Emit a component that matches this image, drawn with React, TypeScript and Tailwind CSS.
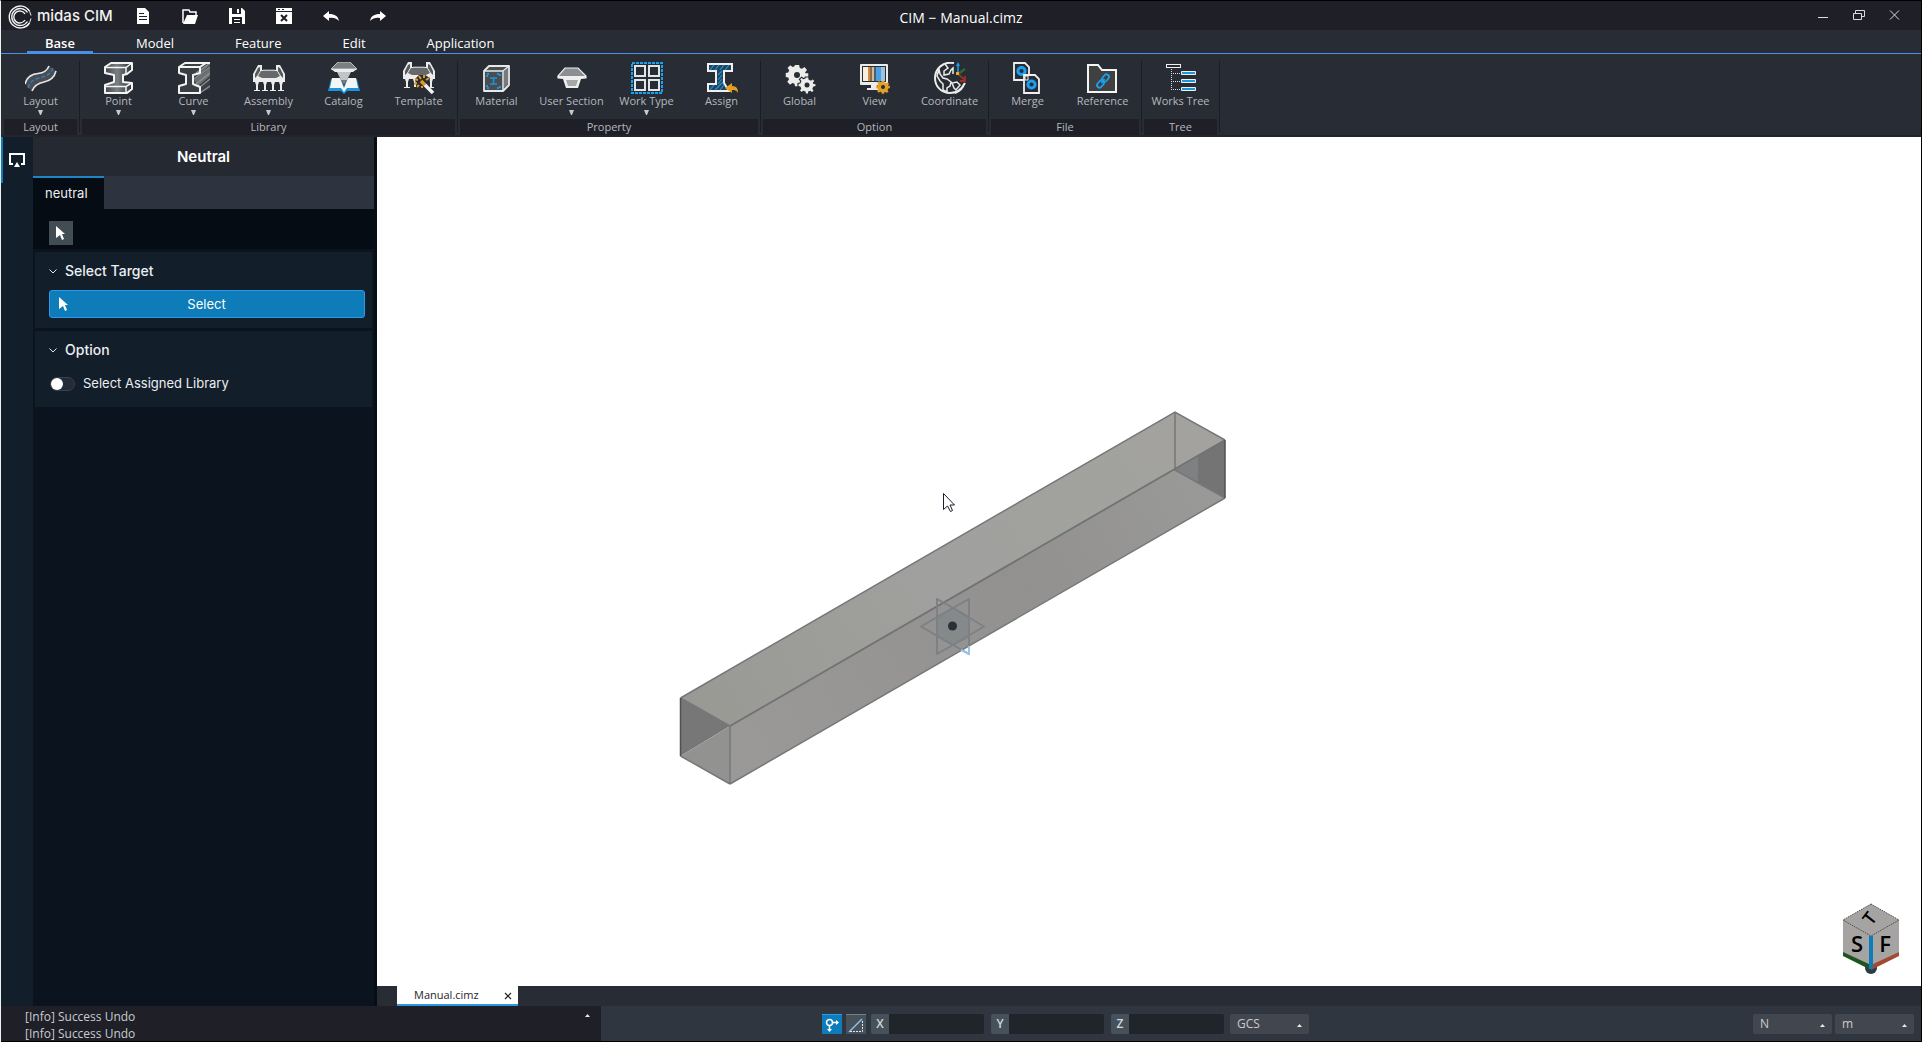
import { useState } from "react";
import type { ReactNode } from "react";

type Tool = { name: string; icon: ReactNode; menu?: boolean };
type Group = { name: string; tools: Tool[] };

/* Ribbon icons, all on a 32px grid */

const LayoutIcon = () => (
  <svg viewBox="0 0 32 32" className="size-8" fill="none">
    <path d="M0 22C2 14 7 12 13 11.500S22 9 24 4L31 9C29 17 24 19 19 20S9 24 7 29Z" fill="#4a4d51" />
    <path d="M0 22C2 14 7 12 13 11.500S22 9 24 4M31 9C29 17 24 19 19 20S9 24 7 29" stroke="#e6e6e6" strokeWidth="1.600" />
    <path d="M3 26C6 17 11 17 16 15.500S25 13 28 6" stroke="#2b83c6" strokeWidth="1.300" strokeDasharray="4 2" />
  </svg>
);

const PointIcon = () => (
  <svg viewBox="0 0 32 32" className="size-8">
    <defs>
      <linearGradient id="web" x1="0" x2="1">
        <stop offset="0" stopColor="#45484b" />
        <stop offset=".45" stopColor="#7c7f81" />
        <stop offset="1" stopColor="#2f3236" />
      </linearGradient>
    </defs>
    <path d="M2 5L8 1H29V8L24 12L20 13V20L29 21V27L24 31H2V23L11 20V13L2 11Z" fill="url(#web)" stroke="#f4f4f4" strokeWidth="2" strokeLinejoin="round" />
    <path d="M2 5.500H23L29 1M23 5.500V12M2 24.500H23L29 21M23 24.500V31" fill="none" stroke="#f4f4f4" strokeWidth="1.500" />
  </svg>
);

const CurveIcon = () => (
  <svg viewBox="0 0 32 32" className="size-8" fill="none">
    <path d="M1 5L7 1H32V27L21 31H1V24L8 22V13L1 11Z" fill="#3b3f43" />
    <path d="M16 18L32 6V14L20 24ZM20 10L30 2H32V3L22 12Z" fill="#6c7073" />
    <path d="M18 11L32 1M16 17L32 5M18 22L32 11M22 25L32 17M22 31L32 24" stroke="#8e9194" strokeWidth="1.200" />
    <path d="M32 1H7L1 5V11L8 13V22L1 24V31H22V25L15 22V13L22 11V5H1M22 5L28 1" stroke="#f4f4f4" strokeWidth="2" strokeLinejoin="round" />
  </svg>
);

const Bridge = () => (
  <>
    <path d="M5 3H9V8H23V3H27L32 12V20H0V12Z" fill="#ececec" />
    <path d="M8 9H24L27 14L23 16H9L5 14Z" fill="#66696c" />
    <path d="M5 6L7 5V9L4 14L2 16V12ZM27 6L25 5V9L28 14L30 16V12Z" fill="#55585b" />
    <path d="M10 8H22" stroke="#9a9c9e" />
  </>
);

const AssemblyIcon = () => (
  <svg viewBox="0 0 32 32" className="size-8" fill="none">
    <Bridge />
    <path d="M2 20H6L5 23V28H7V29H1V28H3V23ZM10 20H14L13 23V28H15V29H9V28H11V23ZM18 20H22L21 23V28H23V29H17V28H19V23ZM26 20H30L29 23V28H31V29H25V28H27V23Z" fill="#ececec" />
  </svg>
);

const CatalogIcon = () => (
  <svg viewBox="0 0 32 32" className="size-8">
    <path d="M3 17L13 17L16 25L19 17H29L32 29H19L16 32L13 29H0Z" fill="#1b95dc" />
    <path d="M4 16H12L16 26L20 16H28L30 26H19L16 30L13 26H2Z" fill="#f4f4f4" />
    <path d="M10 0H22L29 7H3Z" fill="#7c7f81" stroke="#d8d8d8" strokeWidth=".800" />
    <path d="M3 7H29L25 10H7Z" fill="#ececec" />
    <path d="M9 10H23L19 18H13Z" fill="#c2c4c5" />
    <path d="M13 18H19L16 23Z" fill="#77797b" />
  </svg>
);

const TemplateIcon = () => (
  <svg viewBox="0 0 32 32" className="size-8" fill="none">
    <g transform="translate(0 -3)">
      <Bridge />
      <path d="M2 20H6L5 23V28H7V29H1V28H3V23ZM10 20H14L13 23V28H11V23ZM26 20H30L29 23V28H31V29H27V23Z" fill="#ececec" />
    </g>
    <path d="M12 17L16 13H22L27 16L26 22L20 27H14Z" fill="#282c34" />
    <path d="M12 17L15 18M16 14L18 17M21 13V16M14 25L16 23M26 16L23 18M11 22L14 21M19 24V26" stroke="#e39a24" strokeWidth="2" />
    <path d="M18 19L23 24" stroke="#e39a24" strokeWidth="3.500" />
    <path d="M22 23L30 31" stroke="#f4f4f4" strokeWidth="3.500" />
  </svg>
);

const MaterialIcon = () => (
  <svg viewBox="0 0 32 32" className="size-8" fill="none">
    <path d="M3 9L8 4H28V23L22 29H3Z" fill="#4a4d50" stroke="#e8e8e8" strokeWidth="1.800" strokeLinejoin="round" />
    <path d="M3 9H22V29M22 9L28 4" stroke="#e8e8e8" strokeWidth="1.500" />
    <path d="M23 9L27 6V22L23 26Z" fill="#777a7c" />
    <path d="M6 15V12H9M16 12H19V15M6 23V26H9M16 26H19V23" stroke="#1b95dc" strokeWidth="2" strokeDasharray="2 1" />
    <path d="M9 16H16M9 22H16M12.500 16V22" stroke="#1b95dc" strokeWidth="1.500" />
  </svg>
);

const UserSectionIcon = () => (
  <svg viewBox="0 0 32 32" className="size-8">
    <path d="M9 6H22L30 14V16H2V14Z" fill="#8c8f91" stroke="#eee" strokeWidth="1.200" />
    <path d="M2 14H30V16L25 17L22 26H10L7 17L2 16Z" fill="#efefef" />
    <path d="M10 18H22L20 24H12Z" fill="#a5a7a8" />
  </svg>
);

const WorkTypeIcon = () => (
  <svg viewBox="0 0 32 32" className="size-8" fill="none">
    <rect x="1" y="1" width="30" height="30" stroke="#1ba0f0" strokeWidth="2" strokeDasharray="3 1" />
    <path d="M4 4H14V14H4ZM18 4H28V14H18ZM4 18H14V28H4ZM18 18H28V28H18Z" stroke="#dfe6ea" strokeWidth="2" />
  </svg>
);

const AssignIcon = () => (
  <svg viewBox="0 0 32 32" className="size-8" fill="none">
    <path d="M2 2H26V9H18V21L23 29H2V22H10V9H2Z" fill="#24435a" stroke="#f0f0f0" strokeWidth="2" />
    <path d="M4 8L8 3M9 8L13 3M14 8L18 3M19 8L23 3M12 13L16 9M12 18L16 13M12 22L16 17M4 28L8 23M9 28L17 20M14 28L18 23" stroke="#1b95dc" strokeWidth="1.200" />
    <path d="M19 26L26 21V24C31 24 32 27 32 31C30 28 29 28 26 28V31Z" fill="#e3a024" />
  </svg>
);

const gearPath =
  "M-1.700 -8H1.700L2.200 -5.700L4 -5L6 -6.400L8 -4L6.500 -2.200L6.800 -1.500H9V1.700L6.800 2L6 3.800L7.300 5.800L5 8L3.300 6.500L1.700 7L1.500 9H-1.600L-2 7L-3.700 6.400L-5.600 7.700L-7.800 5.300L-6.400 3.600L-7 2L-9 1.600V-1.600L-7 -2L-6.200 -3.800L-7.600 -5.600L-5.400 -7.800L-3.600 -6.500L-2 -7Z";

const GlobalIcon = () => (
  <svg viewBox="0 0 32 32" className="size-8">
    <path d={gearPath} transform="translate(13 13) scale(1.250)" fill="#ececea" />
    <circle cx="13" cy="13" r="3" fill="#282c34" />
    <path d={gearPath} transform="translate(23 23) scale(1)" fill="#ececea" stroke="#282c34" strokeWidth="1.200" />
    <circle cx="23" cy="23" r="2.500" fill="#282c34" />
  </svg>
);

const ViewIcon = () => (
  <svg viewBox="0 0 32 32" className="size-8">
    <rect x="1" y="2" width="28" height="21" rx="1" fill="#ececea" />
    <path d="M12 23H18V26H22V28H8V26H12Z" fill="#ececea" />
    <path d="M3 4H27V20H3Z" fill="#282c34" />
    <path d="M4 5H9V19H4Z" fill="#fbeedb" />
    <path d="M9 5H11V19H9Z" fill="#c98e4c" />
    <path d="M11 5H13V19H11Z" fill="#8b6a48" />
    <path d="M13 5H15V19H13Z" fill="#d8b98d" />
    <path d="M15 5H17V19H15Z" fill="#45617c" />
    <path d="M17 5H22V19H17Z" fill="#4aa0e0" />
    <path d="M22 5H26V19H22Z" fill="#9fc2dd" />
    <path d={gearPath} transform="translate(24 25) scale(.760)" fill="#e3a024" />
    <circle cx="24" cy="25" r="2" fill="#282c34" />
  </svg>
);

const CoordinateIcon = () => (
  <svg viewBox="0 0 32 32" className="size-8" fill="none">
    <path d="M20 1C9 -1 1 7 1 16S8 31 16 31S28 27 31 21M21 31C26 29 29 26 30 22" stroke="#ececea" strokeWidth="2" />
    <path d="M5 7L6 12L9 16L13 17L17 20L16 24L13 26V30L9 28V22L6 19L3 14ZM11 2L14 6L10 9V13L15 12L17 8L19 6V12M20 26L18 21L23 20L26 23L22 28Z" stroke="#ececea" strokeWidth="1.500" />
    <path d="M24 12V3" stroke="#1ba0f0" strokeWidth="1.500" />
    <path d="M22 4L24 0L26 4Z" fill="#1ba0f0" />
    <path d="M24 12L31 7" stroke="#2b6a2d" strokeWidth="2.500" />
    <path d="M24 12L31 18M31 14V19H26" stroke="#9d2f2b" strokeWidth="1.800" />
    <rect x="22" y="10" width="3" height="3" fill="#f0a91c" />
  </svg>
);

const MergeIcon = () => (
  <svg viewBox="0 0 32 32" className="size-8" fill="none">
    <path d="M2 1H13L17 5V18H2Z" stroke="#f0f0f0" strokeWidth="1.800" />
    <circle cx="9.500" cy="9" r="3.600" stroke="#1ba0f0" strokeWidth="3" />
    <path d="M12 13H23L27 17V31H12Z" fill="#282c34" stroke="#f0f0f0" strokeWidth="1.800" />
    <circle cx="19.500" cy="22.500" r="3.600" stroke="#1ba0f0" strokeWidth="3" />
    <path d="M13 14H16V18H13Z" stroke="#f0f0f0" />
  </svg>
);

const ReferenceIcon = () => (
  <svg viewBox="0 0 32 32" className="size-8" fill="none">
    <path d="M1 3H11L15 8H29V30H1Z" fill="#3f403f" stroke="#f4f4f4" strokeWidth="2" />
    <g stroke="#1ba0f0" strokeWidth="1.800">
      <rect x="-4" y="-2.500" width="8" height="5" rx="2.500" transform="translate(18.500 16) rotate(-50)" />
      <rect x="-4" y="-2.500" width="8" height="5" rx="2.500" transform="translate(13.500 22) rotate(-50)" />
      <path d="M14.500 21L17.500 17" />
    </g>
  </svg>
);

const WorksTreeIcon = () => (
  <svg viewBox="0 0 32 32" className="size-8" fill="none">
    <path d="M6.500 7V27M6 11.500H16M6 19.500H16M6 27.500H16" stroke="#dcdcdc" strokeDasharray="1 1" />
    <rect x="1.500" y="2.500" width="14" height="3" stroke="#f0f0f0" />
    <path d="M16.500 9.500H30.500V12.500H16.500ZM16.500 17.500H30.500V20.500H16.500ZM16.500 25.500H30.500V28.500H16.500Z" fill="#1b95dc" stroke="#f0f0f0" />
  </svg>
);

const groups: Group[] = [
  { name: "Layout", tools: [{ name: "Layout", icon: <LayoutIcon />, menu: true }] },
  {
    name: "Library",
    tools: [
      { name: "Point", icon: <PointIcon />, menu: true },
      { name: "Curve", icon: <CurveIcon />, menu: true },
      { name: "Assembly", icon: <AssemblyIcon />, menu: true },
      { name: "Catalog", icon: <CatalogIcon /> },
      { name: "Template", icon: <TemplateIcon /> },
    ],
  },
  {
    name: "Property",
    tools: [
      { name: "Material", icon: <MaterialIcon /> },
      { name: "User Section", icon: <UserSectionIcon />, menu: true },
      { name: "Work Type", icon: <WorkTypeIcon />, menu: true },
      { name: "Assign", icon: <AssignIcon /> },
    ],
  },
  {
    name: "Option",
    tools: [
      { name: "Global", icon: <GlobalIcon /> },
      { name: "View", icon: <ViewIcon /> },
      { name: "Coordinate", icon: <CoordinateIcon /> },
    ],
  },
  {
    name: "File",
    tools: [
      { name: "Merge", icon: <MergeIcon /> },
      { name: "Reference", icon: <ReferenceIcon /> },
    ],
  },
  { name: "Tree", tools: [{ name: "Works Tree", icon: <WorksTreeIcon /> }] },
];

const quickActions = [
  {
    name: "New",
    icon: (
      <>
        <path d="M2 0H10L14 4V16H2Z" fill="#fff" />
        <path d="M4 5.500H9M4 8.500H12M4 11.500H12" stroke="#1e1f27" />
      </>
    ),
  },
  {
    name: "Open",
    icon: (
      <>
        <path d="M1 15V2H7L8 4H14V7" fill="none" stroke="#fff" strokeWidth="1.500" />
        <path d="M5 7H16L13 16H1Z" fill="#fff" />
      </>
    ),
  },
  {
    name: "Save",
    icon: (
      <>
        <path d="M0 0H13L16 3V16H0Z" fill="#fff" />
        <path d="M3 0H12V6H3ZM3 9H13V16H3Z" fill="#1e1f27" />
        <path d="M8 1H10V5H8ZM5 11H11V12H5ZM5 14H11V15H5Z" fill="#fff" />
      </>
    ),
  },
  {
    name: "Close",
    icon: (
      <>
        <path d="M0 0H16V3H0ZM0 4H16V16H0Z" fill="#fff" />
        <path d="M2 1H4V2H2ZM6 1H8V2H6Z" fill="#1e1f27" />
        <path d="M5 7L11 13M11 7L5 13" stroke="#1e1f27" strokeWidth="2" />
      </>
    ),
  },
  {
    name: "Undo",
    icon: <path d="M0 8L6 3V6C12 6 15 8 16 13C13 10 10 9.500 6 10V13Z" fill="#fff" />,
  },
  {
    name: "Redo",
    icon: <path d="M16 8L10 3V6C4 6 1 8 0 13C3 10 6 9.500 10 10V13Z" fill="#fff" />,
  },
];

const Pointer = ({ className }: { className: string }) => (
  <svg viewBox="0 0 10 15" className={className}>
    <path d="M0 0L9 8H6L8 13L6 14L4 9L0 12Z" fill="#fff" />
  </svg>
);

const TitleBar = () => (
  <header className="grid h-[29px] grid-cols-[1fr_auto_1fr] bg-[#1e1f27]">
    <div className="flex items-center pl-[7px]">
      <svg viewBox="0 0 24 24" className="mt-[2px] size-6" fill="none" stroke="#f2f2f2">
        <path d="M21.500 6A11 11 0 1 0 21.500 18" strokeWidth="1.400" />
        <path d="M23 10.500A11 11 0 0 0 19 3.500M23 13.500A11 11 0 0 1 19 20.500" strokeWidth="1" />
        <path d="M19.500 7.500A8.500 8.500 0 1 0 19.500 16.500" strokeWidth="1.400" />
        <path d="M17 9A6 6 0 1 0 17 15" strokeWidth="1.400" />
      </svg>
      <span className="mt-[2px] ml-[5px] w-[82px] font-[Inter] text-[15px] font-medium text-[#f2f2f2]">midas CIM</span>
      <div className="flex">
        {quickActions.map((action) => (
          <button key={action.name} aria-label={action.name} className="flex h-7 w-[47px] items-center justify-center">
            <svg viewBox="0 0 16 16" className="size-4">
              {action.icon}
            </svg>
          </button>
        ))}
      </div>
    </div>
    <h1 className="pt-[7px] text-sm leading-5 text-white">CIM − Manual.cimz</h1>
    <div className="flex justify-end pr-2">
      <button aria-label="Minimize" className="flex h-7 w-9 items-center justify-center">
        <svg viewBox="0 0 12 12" className="size-3">
          <path d="M1 8.500H11" stroke="#ddd" />
        </svg>
      </button>
      <button aria-label="Restore" className="flex h-7 w-9 items-center justify-center">
        <svg viewBox="0 0 12 12" className="size-3" fill="none" stroke="#ddd">
          <path d="M.5 4.500H8.500V10.500H.5ZM2.500 4V1.500H11.500V7.500H9" />
        </svg>
      </button>
      <button aria-label="Exit" className="flex h-7 w-9 items-center justify-center">
        <svg viewBox="0 0 12 12" className="size-3">
          <path d="M1 1.500L10 10.500M10 1.500L1 10.500" stroke="#ddd" />
        </svg>
      </button>
    </div>
  </header>
);

const MenuTabs = () => (
  <nav className="flex h-6 gap-[25px] border-b border-[#4a8fe8] bg-[#282c34] pl-[26px] text-[13px] text-white">
    <a href="#base" className="border-b-2 border-[#4a8fe8] px-[18px] leading-[26px] font-semibold">Base</a>
    {["Model", "Feature", "Edit", "Application"].map((tab) => (
      <a key={tab} href={`#${tab.toLowerCase()}`} className="px-[18px] leading-[26px]">
        {tab}
      </a>
    ))}
  </nav>
);

const Ribbon = () => (
  <div className="flex h-[83px] border-b-2 border-[#22252d] bg-[#282c34] pl-[2px] text-[11px] text-[#b4b8be]">
    {groups.map((group) => (
      <section key={group.name} className="flex">
        <div className="flex flex-col">
          <div className="flex grow">
            {group.tools.map((tool) => (
              <button key={tool.name} className="flex w-[75px] flex-col items-center pt-2">
                {tool.icon}
                <span className="leading-[14px] whitespace-nowrap">{tool.name}</span>
                {tool.menu && (
                  <svg viewBox="0 0 5 5" className="mt-[2px] size-[5px]">
                    <path d="M0 0H5L3 5H2Z" fill="#c8cacd" />
                  </svg>
                )}
              </button>
            ))}
          </div>
          <h2 className="mx-px h-4 bg-[#1e1f27] text-center leading-4">{group.name}</h2>
        </div>
        <div className="mx-px mt-[7px] mb-[3px] w-px bg-[#1b1d24]" />
      </section>
    ))}
  </div>
);

const Chevron = () => (
  <svg viewBox="0 0 8 5" className="h-[5px] w-2" fill="none" stroke="#e4e6e8">
    <path d="M.5 .5L4 4L7.500 .5" />
  </svg>
);

const SidePanel = () => {
  const [assigned, setAssigned] = useState(false);

  return (
    <aside className="flex w-[376px] shrink-0 border-r-[3px] border-[#060d15] bg-[#0b131e] font-[Inter] text-[13px] text-[#eceef0]">
      <div className="w-8 shrink-0 bg-[#131e2b]">
        <button aria-label="Display" className="flex h-[46px] w-full items-center justify-center border-l-2 border-[#0d7cb8] pr-[2px]">
          <svg viewBox="0 0 16 14" className="h-[14px] w-4">
            <path d="M4 11H1V1H15V11H12" fill="none" stroke="#fff" strokeWidth="2" />
            <path d="M5 14L8 9L11 14Z" fill="#fff" />
          </svg>
        </button>
      </div>
      <div className="min-w-0 grow">
        <h2 className="h-[39px] bg-[#252932] text-center text-[15px] leading-[40px] font-semibold text-white">Neutral</h2>
        <div className="flex h-[33px] bg-[#2d333f]">
          <button className="w-[71px] border-t-2 border-[#1f86c6] bg-[#050c13] px-3 text-left">neutral</button>
        </div>
        <div className="h-10 bg-[#050c13] px-4 pt-3">
          <button aria-label="Pick" className="flex size-6 items-center justify-center bg-[#414c55]">
            <Pointer className="h-[15px] w-[10px]" />
          </button>
        </div>

        <section className="mx-[2px] mt-[3px] h-[76px] bg-[#131e2b] px-[14px] pt-2">
          <h3 className="flex h-[22px] items-center gap-2 text-sm font-medium">
            <Chevron />
            Select Target
          </h3>
          <button className="mt-2 flex h-7 w-[316px] items-center rounded-[3px] border border-[#2a9af0] bg-[#0d7cb8] pt-px pr-5 pl-[9px] text-white">
            <Pointer className="h-[15px] w-[10px]" />
            <span className="grow text-center">Select</span>
          </button>
        </section>

        <section className="mx-[2px] mt-[3px] h-[76px] bg-[#131e2b] px-[14px] pt-2">
          <h3 className="flex h-[22px] items-center gap-2 text-sm font-medium">
            <Chevron />
            Option
          </h3>
          <label className="mt-[13px] flex h-5 items-center gap-2">
            <input
              type="checkbox"
              role="switch"
              checked={assigned}
              onChange={(e) => setAssigned(e.target.checked)}
              className="ml-px h-[14px] w-[25px] appearance-none rounded-full border border-[#39414c] bg-[#232b36] before:block before:size-3 before:rounded-full before:bg-white checked:bg-[#0d7cb8] checked:before:ml-[11px]"
            />
            Select Assigned Library
          </label>
        </section>
      </div>
    </aside>
  );
};

const Model = () => (
  <svg viewBox="377 137 1544 849" className="size-full" role="img" aria-label="Beam model">
    <defs>
      <linearGradient id="top" gradientUnits="userSpaceOnUse" x1="681" y1="760" x2="1225" y2="430">
        <stop offset="0" stopColor="#989893" />
        <stop offset=".5" stopColor="#a0a19e" />
        <stop offset="1" stopColor="#a3a29f" />
      </linearGradient>
      <linearGradient id="side" gradientUnits="userSpaceOnUse" x1="730" y1="760" x2="1225" y2="470">
        <stop offset="0" stopColor="#9a9998" />
        <stop offset=".6" stopColor="#929190" />
        <stop offset="1" stopColor="#9a9a98" />
      </linearGradient>
    </defs>

    {/* Faces */}
    <path d="M680.500 698L1175 412L1225 440L730 726Z" fill="url(#top)" />
    <path d="M730 726L1225 440V498L730 784Z" fill="url(#side)" />
    <path d="M680.500 698L730 726L680.500 756Z" fill="#777777" />
    <path d="M680.500 756L730 726V784Z" fill="#929291" />
    <path d="M1175 470L1225 440V498Z" fill="#747474" />
    <path d="M1175 470L1198 456V483Z" fill="#7f8081" />

    {/* Edges */}
    <g fill="none" stroke="#75787a" strokeWidth="1.500">
      <path d="M680.500 698L1175 412L1225 440M730 784L1225 498M680.500 756L730 784M680.500 698L730 726V784M1175 412V470L1225 498" />
      <path d="M730 726L1225 440" stroke="#707273" strokeWidth="1.800" />
      <path d="M680.500 698V756M1225 440V498" stroke="#4d5254" />
    </g>

    {/* Work planes at the origin */}
    <path d="M952 608L969 617V636L952 645L937 636V617Z" fill="#858989" />
    <g fill="none" stroke="#7c8186" strokeWidth="2" strokeLinejoin="round">
      <path d="M921 626.500L953 608L984 626.500L953 645Z" />
      <path d="M937 599L969 617V654L937 636Z" />
      <path d="M969 599L937 617V654L969 636Z" />
    </g>
    <path d="M961 650L969 654V646" fill="none" stroke="#9cc3ea" strokeWidth="2" />
    <circle cx="952.500" cy="626" r="4.500" fill="#2b2f36" />

    {/* Mouse cursor */}
    <path d="M943.500 493.500V509.500L947.500 506L950.500 511.500L952.500 510.500L950 505H954.500Z" fill="#fff" stroke="#1d1d2b" />
  </svg>
);

const ViewCube = () => (
  <button aria-label="View cube" className="absolute right-[21px] bottom-[11px]">
    <svg viewBox="0 0 58 72" className="h-[72px] w-[58px]">
      <circle cx="29" cy="65" r="6" fill="#303a47" />
      <path d="M29 1L57 17V51L29 66L1 51V17Z" fill="#a6a4a2" />
      <path d="M1 49V53L29 67V62Z" fill="#1f5421" />
      <path d="M57 49V53L29 67V62Z" fill="#a44a30" />
      <path d="M29 1L57 17L29 33L1 17Z" fill="none" stroke="#4c4c4c" strokeDasharray="1.500 1" />
      <path d="M27 33H31V66H27Z" fill="#0d7cb8" />
      <g fontFamily="Open Sans, sans-serif" fontSize="22" fontWeight="600" textAnchor="middle">
        <text x="15" y="49">S</text>
        <text x="43" y="49">F</text>
        <text transform="translate(27 15) rotate(-52)" x="0" y="7" fontSize="18">T</text>
      </g>
    </svg>
  </button>
);

const UpArrow = () => (
  <svg viewBox="0 0 5 3" className="pointer-events-none absolute top-1/2 right-[7px] h-[3px] w-[5px]">
    <path d="M0 3L2.500 0L5 3Z" fill="#e6e8ea" />
  </svg>
);

const Picker = ({ label, options }: { label: string; options: string[] }) => (
  <div className="relative">
    <select aria-label={label} className="block h-5 w-[79px] appearance-none rounded-[2px] bg-[#42464f] px-[7px] text-xs leading-5 text-[#c9ccd0]">
      {options.map((option) => (
        <option key={option}>{option}</option>
      ))}
    </select>
    <UpArrow />
  </div>
);

const StatusBar = () => (
  <footer className="flex h-9 border-b border-black bg-[#303640] text-xs">
    <div className="relative w-[600px] overflow-hidden bg-[#1e1f27] pt-[2px] pl-6 leading-[17px] text-[#c9ccd0]">
      <p>[Info] Success Undo</p>
      <p>[Info] Success Undo</p>
      <button aria-label="Expand log" className="absolute top-2 right-[11px] h-[3px] w-[5px]">
        <svg viewBox="0 0 5 3" className="block h-[3px] w-[5px]">
          <path d="M0 3L2.500 0L5 3Z" fill="#e6e8ea" />
        </svg>
      </button>
    </div>
    <div className="ml-[221px] flex items-start pt-2">
      <button aria-label="Snap" className="flex size-5 items-center justify-center border-t border-[#2a9af0] bg-[#0d7cb8]">
        <svg viewBox="0 0 18 18" className="size-[18px]" fill="none" stroke="#fff" strokeWidth="1.500">
          <circle cx="6.500" cy="6.500" r="3" />
          <path d="M10 6.500H15M6.500 10V15" />
          <path d="M13 4L16 6.500L13 9ZM4 13L6.500 16L9 13Z" fill="#fff" stroke="none" />
        </svg>
      </button>
      <button aria-label="Angle" className="ml-1 flex size-5 items-center justify-center border-t border-[#7b7d80] bg-[#47515c]">
        <svg viewBox="0 0 16 16" className="size-4" fill="none">
          <path d="M1 15L14 2" stroke="#8fc2e6" strokeWidth="1.500" />
          <path d="M2 14.500H14.500V3" stroke="#e6e6e6" strokeDasharray="2 1" />
        </svg>
      </button>
      <div className="ml-[5px] flex gap-[7px]">
        {["X", "Y", "Z"].map((axis) => (
          <label key={axis} className="flex h-5 overflow-hidden rounded-[2px]">
            <span className="w-[18px] bg-[#47515c] text-center leading-5 font-semibold text-[#d5d8da]">{axis}</span>
            <input type="text" className="w-[95px] bg-[#20242b] px-1 text-[#d5d8da] outline-none" />
          </label>
        ))}
      </div>
      <div className="ml-[6px]">
        <Picker label="Coordinate system" options={["GCS", "UCS"]} />
      </div>
    </div>
    <div className="mr-[7px] ml-auto flex items-start gap-[3px] pt-2">
      <Picker label="Force unit" options={["N", "kN"]} />
      <Picker label="Length unit" options={["m", "mm"]} />
    </div>
  </footer>
);

const App = () => {
  return (
    <div className="flex h-screen flex-col overflow-hidden border-t border-r border-l border-t-black border-r-black border-l-[#f0f0f0] bg-[#282c34] font-['Open_Sans',sans-serif]">
      <TitleBar />
      <MenuTabs />
      <Ribbon />
      <div className="flex min-h-0 grow">
        <SidePanel />
        <main className="flex min-w-0 grow flex-col">
          <div className="relative min-h-0 grow bg-white">
            <Model />
            <ViewCube />
          </div>
          <div className="flex h-5 bg-[#282c34] pl-5">
            <div className="flex w-[121px] items-center justify-between border-b-2 border-[#2a9ae0] bg-white pt-px pr-[6px] pl-[17px] text-[11px] text-[#1e1f27]">
              <span>Manual.cimz</span>
              <button aria-label="Close tab">
                <svg viewBox="0 0 8 8" className="size-2" stroke="#222" strokeWidth="1.200">
                  <path d="M1 1L7 7M7 1L1 7" />
                </svg>
              </button>
            </div>
          </div>
        </main>
      </div>
      <StatusBar />
    </div>
  );
};

export default App;
